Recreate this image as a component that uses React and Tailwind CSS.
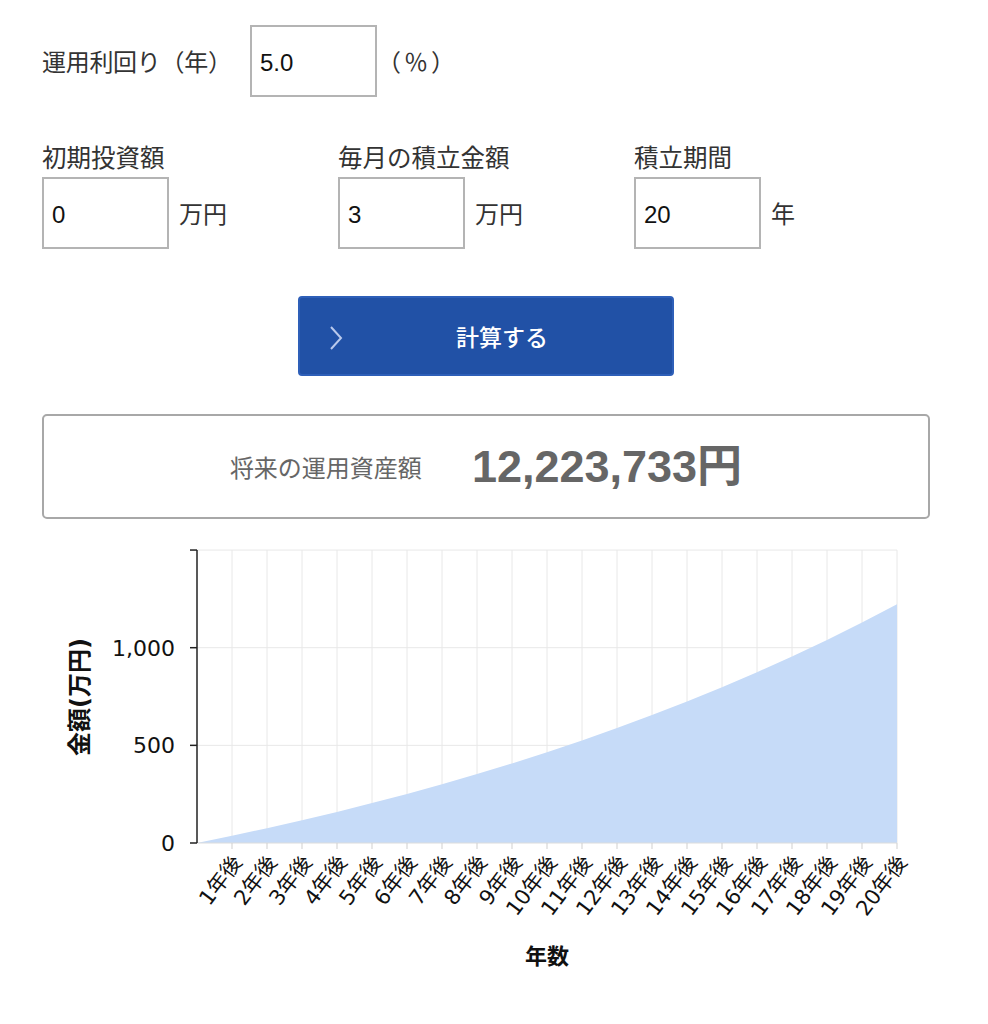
import React from 'react';

// yearly balances: 3万円/month, 5% annual (monthly equivalent), paid at start of month
const monthly = Math.pow(1.05, 1 / 12) - 1;
const values = [0];
for (let k = 1; k <= 20; k++) {
  values.push((3 * (Math.pow(1.05, k) - 1) / monthly) * (1 + monthly));
}

const X0 = 155;
const STEP = 35;
const Y0 = 313;
const SCALE = 0.1953;
const xOf = (k) => X0 + STEP * k;
const yOf = (v) => Y0 - v * SCALE;

function Chart() {
  const area =
    `M${X0} ${Y0} ` +
    values.map((v, k) => `L${xOf(k)} ${yOf(v).toFixed(1)}`).join(' ') +
    ` L${xOf(20)} ${Y0} Z`;

  return (
    <svg width="888" height="445" className="block" style={{ fontFamily: '"DejaVu Sans", "Noto Sans CJK JP", sans-serif' }}>
      {/* grid */}
      {values.slice(1).map((_, i) => (
        <line key={'v' + i} x1={xOf(i + 1)} y1={yOf(1500)} x2={xOf(i + 1)} y2={Y0} stroke="#e8e8e8" strokeWidth="1" />
      ))}
      {[500, 1000, 1500].map((v) => (
        <line key={'h' + v} x1={X0} y1={yOf(v)} x2={xOf(20)} y2={yOf(v)} stroke="#e8e8e8" strokeWidth="1" />
      ))}

      <path d={area} fill="#c6dbf8" />

      {/* x axis */}
      <line x1={X0} y1={Y0} x2={xOf(20)} y2={Y0} stroke="#dcdcdc" strokeWidth="1" />
      {values.slice(1).map((_, i) => (
        <line key={'t' + i} x1={xOf(i + 1)} y1={Y0} x2={xOf(i + 1)} y2={Y0 + 6} stroke="#cfcfcf" strokeWidth="1" />
      ))}

      {/* y axis */}
      <line x1={X0} y1={yOf(1500)} x2={X0} y2={Y0} stroke="#222" strokeWidth="1.5" />
      {[0, 500, 1000, 1500].map((v) => (
        <line key={'yt' + v} x1={X0 - 7} y1={yOf(v)} x2={X0} y2={yOf(v)} stroke="#222" strokeWidth="1.5" />
      ))}
      {[
        [0, '0'],
        [500, '500'],
        [1000, '1,000'],
      ].map(([v, label]) => (
        <text key={'yl' + v} x={X0 - 22} y={yOf(v)} dy="0.36em" textAnchor="end" fontSize="22" fill="#111">
          {label}
        </text>
      ))}

      {values.slice(1).map((_, i) => (
        <text
          key={'xl' + i}
          x={xOf(i + 1) + 5}
          y={Y0 + 15}
          textAnchor="end"
          dy="0.35em"
          fontSize="21"
          fill="#111"
          transform={`rotate(-53 ${xOf(i + 1) + 5} ${Y0 + 15})`}
        >
          {i + 1}年後
        </text>
      ))}

      <text x={(X0 + xOf(20)) / 2} y={434} textAnchor="middle" fontSize="22" fontWeight="bold" fill="#111">
        年数
      </text>
      <text
        x={38}
        y={167}
        textAnchor="middle"
        dy="0.35em"
        fontSize="24"
        fontWeight="bold"
        fill="#111"
        transform="rotate(-90 38 167)"
      >
        金額(万円)
      </text>
    </svg>
  );
}

function NumBox({ value }) {
  return (
    <input
      defaultValue={value}
      className="w-[127px] h-[72px] border-2 border-[#b4b4b4] bg-white pl-[8px] pt-[3px] text-[24px] text-[#111] font-['Liberation_Sans','Noto_Sans_CJK_JP',sans-serif] outline-none"
    />
  );
}

function Field({ label, value, unit }) {
  return (
    <div className="w-[297px]">
      <div className="text-[24.5px] leading-[30px]">{label}</div>
      <div className="mt-[5px] flex items-center">
        <NumBox value={value} />
        <span className="ml-[10px] text-[24px]">{unit}</span>
      </div>
    </div>
  );
}

export default function App() {
  return (
    <div className="w-[988px] min-h-[1024px] bg-white pl-[42px] pt-[25px] text-[#333] font-['Noto_Sans_CJK_JP',sans-serif]">
      <div className="w-[888px]">
        <div className="flex items-center h-[72px]">
          <span className="w-[208px] text-[24px] tracking-[-0.3px]">運用利回り（年）</span>
          <NumBox value="5.0" />
          <span className="text-[24px] tracking-[3px]">（％）</span>
        </div>

        <div className="mt-[45px] flex">
          <Field label="初期投資額" value="0" unit="万円" />
          <Field label="毎月の積立金額" value="3" unit="万円" />
          <Field label="積立期間" value="20" unit="年" />
        </div>

        <button className="relative mx-auto mt-[47px] flex h-[80px] w-[376px] items-center justify-center rounded-[4px] border-2 border-[#2e5fb8] bg-[#2151a6] pl-[32px] text-[23px] font-medium text-white">
          <svg className="absolute left-[28px] top-[27px]" width="16" height="26" viewBox="0 0 16 26">
            <path d="M3 2 L13 13 L3 24" fill="none" stroke="#b9c9ec" strokeWidth="2" />
          </svg>
          計算する
        </button>

        <div className="mt-[38px] flex h-[105px] items-center justify-center gap-[50px] rounded-[5px] border-2 border-[#a8a8a8] text-[#666]">
          <span className="text-[24px]">将来の運用資産額</span>
          <span className="text-[45px] font-bold font-['Liberation_Sans','Noto_Sans_CJK_JP',sans-serif]">
            12,223,733円
          </span>
        </div>

        <div className="mt-[11px]">
          <Chart />
        </div>
      </div>
    </div>
  );
}
